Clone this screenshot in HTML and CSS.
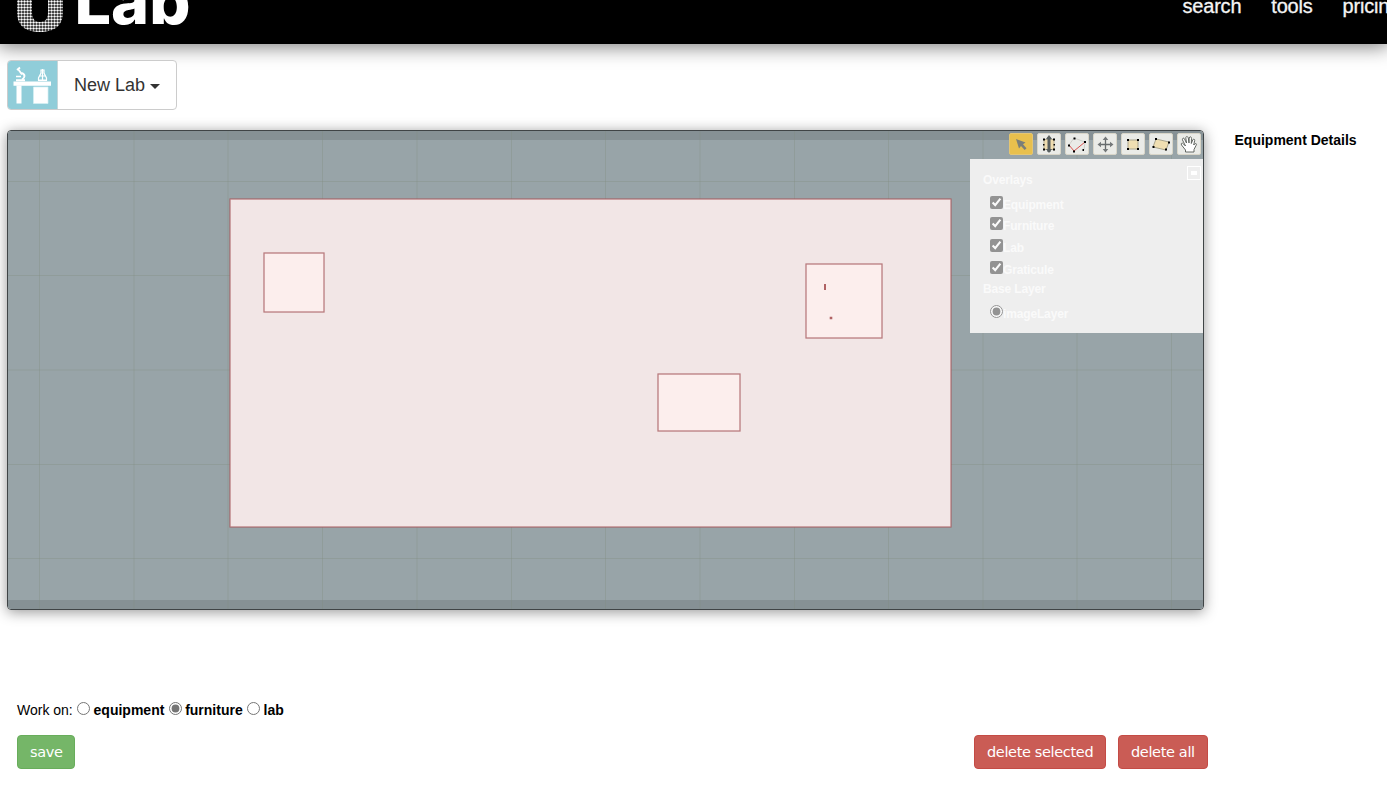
FILE: index.html
```html
<!DOCTYPE html>
<html lang="en">
<head>
<meta charset="utf-8">
<title>ULab</title>
<link rel="stylesheet" href="styles.css">
</head>
<body>
<header class="header">
  <svg class="logo" width="200" height="44" viewBox="0 0 200 44">
    <defs>
      <pattern id="dots" x="17" y="0" width="3" height="3" patternUnits="userSpaceOnUse"><circle cx="1.5" cy="1.5" r="1.25" fill="#fff"/></pattern>
    </defs>
    <path d="M17 -5H32V12C32 19 35 22 40 22S48 19 48 12V-5H63V12C63 26 54 32 40 32S17 26 17 12Z" fill="url(#dots)"/>
    <text class="logo-text" x="74.500" y="24" textLength="116" lengthAdjust="spacingAndGlyphs">Lab</text>
  </svg>
  <nav class="nav"><a>search</a><a>tools</a><a>pricing</a></nav>
</header>
<div class="lab-menu">
  <div class="lab-icon">
    <svg width="50" height="48" viewBox="0 0 50 48" fill="none" stroke="#fff">
      <path d="M6.500 20.500h37.500v4.200H6.500z" fill="#fff" stroke="none"/>
      <path d="M9.500 24.500h5v18h-5z" fill="#fff" stroke="none"/>
      <path d="M26.500 26h14.500v16.500H26.500z" fill="#fff" stroke="#d5eff3" stroke-width=".7"/>
      <path d="M9 19.200h9M11 8l4 5.500M10 9l3-2.500M14 12c5 1 4 5 1 6.500" stroke-width="1.900"/>
      <path d="M9 15.500h5" stroke-width="1.500"/>
      <path d="M34 9h3v3l2.500 5v2h-8v-2l2.500-5zM31 19.500h9M33 15h5M35.500 8v11" stroke-width="1.200"/>
    </svg>
  </div>
  <div class="lab-name">New Lab<span class="caret"></span></div>
</div>
<main class="workspace">
  <section class="map">
    <svg class="canvas" width="1195" height="478" viewBox="8 131 1195 478">
      <rect x="8" y="131" width="1195" height="478" fill="#869195"/>
      <rect x="8" y="140" width="1195" height="460" fill="#98a4a8"/>
      <path d="M39.500 131v478M134 131v478M228 131v478M322.500 131v478M417 131v478M511.500 131v478M605.500 131v478M700 131v478M794.500 131v478M888.500 131v478M983 131v478M1077 131v478M1171.500 131v478M8 181.500h1195M8 275.500h1195M8 370h1195M8 464.500h1195M8 558.500h1195" stroke="#808c80" stroke-opacity=".34"/>
      <g stroke="#a6595c" stroke-opacity=".78" stroke-width="1.250">
        <rect x="230" y="199" width="721" height="328" fill="#f2e6e6"/>
        <rect x="264" y="253" width="60" height="59" fill="#fceeed"/>
        <rect x="806" y="264" width="76" height="74" fill="#fceeed"/>
        <rect x="658" y="374" width="82" height="57" fill="#fceeed"/>
      </g>
      <path d="M824 284h2v6h-2zM829.700 316.700h2.600v2.600h-2.600z" fill="#b06264"/>
    </svg>
    <div class="tools">
      <div class="tool active"><svg width="24" height="22"><path d="M7 6l9.500 3.500-2.500 1.800 3.500 4-1.800 1.700-3.700-4-2 2.500z" fill="#7b7f78"/></svg></div>
      <div class="tool"><svg width="24" height="22"><path d="M7 6.500h10v10H7z" fill="#eedcaf" stroke="#b6ad91"/><path d="M12 4v15" stroke="#596060" stroke-width="3"/><path d="M9 6l3-4 3 4zM9 16l3 4 3-4z" fill="#596060"/><path d="M6 5.500h2v2H6zM6 11h1.500v1.500H6zM6 15.500h2v2H6zM16 5.500h2v2h-2zM16.500 11H18v1.500h-1.500zM16 15.500h2v2h-2z"/></svg></div>
      <div class="tool"><svg width="24" height="22"><path d="M4 12l5-7 11 4-1 8" fill="none" stroke="#c8c8c2" stroke-width=".8"/><path d="M4 12l5 6L20 9" fill="none" stroke="#d85350"/><path d="M3 11.500h2v2H3zM8.500 4.500h2v2h-2zM8 17.500h2v2H8zM19 8h2v2h-2zM17.500 16H19v2h-1.500z"/></svg></div>
      <div class="tool"><svg width="24" height="22"><path d="M6 11.500h13M12.500 5.500v12" stroke="#666b6c" stroke-width="1.300"/><path d="M8 8.700v5.600L4.500 11.500zM17 8.700v5.600l3.500-2.800zM9.700 7h5.600L12.500 3.500zM9.700 16h5.600l-2.800 3.500z" fill="#747879"/></svg></div>
      <div class="tool"><svg width="24" height="22"><path d="M7 7h10v9H7z" fill="#f0dfb2" stroke="#aaa58d"/><path d="M6 6h2v2H6zM16 6h2v2h-2zM6 15h2v2H6zM16 15h2v2h-2z"/></svg></div>
      <div class="tool"><svg width="24" height="22"><path d="M7 6l13 3-3 8-13-3z" fill="#f0dfb2" stroke="#aaa58d"/><path d="M6 5h2v2H6zM19 8.500h2v2h-2zM16 15.500h2v2h-2zM3.500 13h2v2h-2z"/></svg></div>
      <div class="tool"><svg width="24" height="22"><path d="M8.500 19v-2L4.500 12c-1-2 1-2.500 2-1l2 2L5.500 7c-.5-2 1.500-2.500 2-1l2 4L8.800 5c0-2 2-2 2.500 0l.7 5 .2-5c.5-1.800 2.300-1.500 2.300.5l-.2 5 1.400-3.500c.6-1.500 2.200-1 2 .5L16.700 12l1-1c1-1 2.300-.3 1.500 1.200L17 16.500V19z" fill="#fff" stroke="#555a55" stroke-width=".9"/></svg></div>
    </div>
    <div class="layers">
      <div class="minimize"></div>
      <div class="layers-title">Overlays</div>
      <div class="choice equipment"><input type="checkbox" checked><span>Equipment</span></div>
      <div class="choice"><input type="checkbox" checked><span>Furniture</span></div>
      <div class="choice"><input type="checkbox" checked><span>Lab</span></div>
      <div class="choice graticule"><input type="checkbox" checked><span>Graticule</span></div>
      <div class="layers-title">Base Layer</div>
      <div class="choice"><input type="radio" checked><span>imageLayer</span></div>
    </div>
  </section>
  <aside class="details">Equipment Details</aside>
</main>
<div class="work-on">Work on:<input type="radio" name="work"><b>equipment</b><input type="radio" name="work" checked><b>furniture</b><input type="radio" name="work"><b>lab</b></div>
<div class="actions">
  <button class="btn save">save</button>
  <button class="btn danger selected">delete selected</button>
  <button class="btn danger all">delete all</button>
</div>
</body>
</html>
```
FILE: styles.css
```css
* { box-sizing: border-box; }
html, body { height: 808px; overflow: hidden; }
body { margin: 0; background: #fff; color: #000; font-family: "Liberation Sans", Arial, sans-serif; font-size: 14px; }
svg { display: block; }
.header { height: 44px; background: #000; box-shadow: 0 0 20px 2px rgba(0,0,0,.55); display: flex; }
.logo { flex: none; overflow: hidden; }
.logo-text { font-family: Inter, sans-serif; font-weight: 800; font-size: 63px; fill: #fff; }
.nav { flex: none; display: flex; gap: 30px; margin-left: 982.500px; margin-top: -6px; font-size: 20px; line-height: 24px; height: 24px; color: #f4f4f4; letter-spacing: -.2px; -webkit-text-stroke: .3px #f4f4f4; }
.lab-menu { display: flex; width: 170px; height: 50px; margin: 16px 0 0 7px; border: 1px solid #ccc; border-radius: 4px; overflow: hidden; background: #fff; }
.lab-icon { flex: none; width: 51px; margin: -1px 0 -1px -1px; padding-top: 1px; background: #90cdd9; border-right: 1px solid #c5d6d9; }
.lab-name { display: flex; align-items: center; padding-left: 16px; font-size: 18px; color: #333; }
.caret { border: 5px solid transparent; border-top-color: #333; border-bottom: 0; margin: 3px 0 0 5px; }
.workspace { display: flex; margin: 20px 0 0 7px; height: 480px; }
.map { position: relative; flex: none; width: 1197px; height: 480px; border: 1px solid #3f4446; border-radius: 4px; box-shadow: 0 2px 14px rgba(0,0,0,.42); }
.canvas { border-radius: 3px; }
.tools { position: absolute; top: 2px; right: 2px; display: flex; gap: 4px; }
.tool { width: 24px; height: 22px; background: #eaebe7; border: 1px solid #d8d5c8; border-radius: 2px; }
.tool svg { margin: -1px; }
.active { background: #e8c04d; border-color: #e4c673; }
.layers { position: absolute; top: 28px; right: 0; width: 233px; height: 174px; background: #eee; color: #fafafa; font-size: 12px; font-weight: bold; line-height: 14px; padding: 14px 0 0 13px; }
.minimize { position: absolute; right: 2px; top: 7px; width: 14px; height: 14px; border: 1px solid #fff; }
.minimize::after { content: ""; display: block; width: 6px; height: 4px; margin: 4px 3px; background: #fff; }
.layers-title { height: 23px; letter-spacing: -.15px; }
.choice { display: flex; height: 22px; padding-left: 7px; letter-spacing: -.15px; }
.choice input, .work-on input { width: 13px; height: 13px; margin: 0; flex: none; accent-color: #757575; }
.choice input { opacity: .75; }
.choice span { padding-top: 2px; }
.equipment, .graticule { height: 21px; }
.details { padding: 2px 0 0 30.500px; font-weight: bold; line-height: 17px; }
.work-on { display: flex; align-items: center; margin: 92px 0 0 17px; height: 17px; line-height: 17px; }
.work-on input { margin: -4px 3.500px 0 4.300px; }
.actions { display: flex; width: 1191px; margin: 16px 0 0 17px; }
.btn { height: 34px; margin: 0; padding: 0 12px 1px; border: 1px solid; border-radius: 4px; color: #fff; font: 14.500px "DejaVu Sans", Verdana, sans-serif; letter-spacing: -.35px; white-space: nowrap; }
.save { width: 58px; background: #75b668; border-color: #68ad5b; }
.danger { background: #ca5c55; border-color: #c44b45; }
.selected { width: 132px; margin-left: auto; }
.all { width: 90px; margin-left: 12px; padding-right: 13px; }
```
